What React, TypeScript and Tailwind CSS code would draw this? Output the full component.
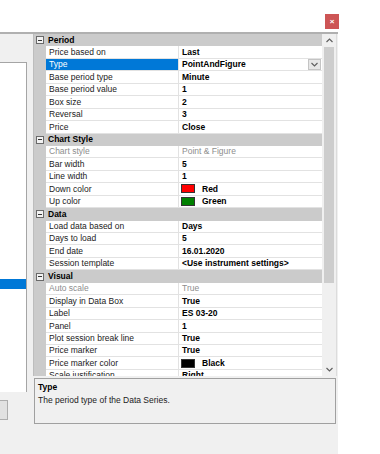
import React from 'react'

type Row =
  | { kind: 'header'; title: string }
  | {
      kind: 'prop'
      name: string
      value: string
      disabled?: boolean
      selected?: boolean
      dropdown?: boolean
      swatch?: string
    }

const rows: Row[] = [
  { kind: 'header', title: 'Period' },
  { kind: 'prop', name: 'Price based on', value: 'Last' },
  { kind: 'prop', name: 'Type', value: 'PointAndFigure', selected: true, dropdown: true },
  { kind: 'prop', name: 'Base period type', value: 'Minute' },
  { kind: 'prop', name: 'Base period value', value: '1' },
  { kind: 'prop', name: 'Box size', value: '2' },
  { kind: 'prop', name: 'Reversal', value: '3' },
  { kind: 'prop', name: 'Price', value: 'Close' },
  { kind: 'header', title: 'Chart Style' },
  { kind: 'prop', name: 'Chart style', value: 'Point & Figure', disabled: true },
  { kind: 'prop', name: 'Bar width', value: '5' },
  { kind: 'prop', name: 'Line width', value: '1' },
  { kind: 'prop', name: 'Down color', value: 'Red', swatch: '#ff0000' },
  { kind: 'prop', name: 'Up color', value: 'Green', swatch: '#008000' },
  { kind: 'header', title: 'Data' },
  { kind: 'prop', name: 'Load data based on', value: 'Days' },
  { kind: 'prop', name: 'Days to load', value: '5' },
  { kind: 'prop', name: 'End date', value: '16.01.2020' },
  { kind: 'prop', name: 'Session template', value: '<Use instrument settings>' },
  { kind: 'header', title: 'Visual' },
  { kind: 'prop', name: 'Auto scale', value: 'True', disabled: true },
  { kind: 'prop', name: 'Display in Data Box', value: 'True' },
  { kind: 'prop', name: 'Label', value: 'ES 03-20' },
  { kind: 'prop', name: 'Panel', value: '1' },
  { kind: 'prop', name: 'Plot session break line', value: 'True' },
  { kind: 'prop', name: 'Price marker', value: 'True' },
  { kind: 'prop', name: 'Price marker color', value: 'Black', swatch: '#000000' },
  { kind: 'prop', name: 'Scale justification', value: 'Right' },
]

function Chevron({ up }: { up?: boolean }) {
  return (
    <svg width="7" height="5" viewBox="0 0 7 5">
      <path
        d={up ? 'M0.5 4 L3.5 1 L6.5 4' : 'M0.5 1 L3.5 4 L6.5 1'}
        fill="none"
        stroke="#606060"
        strokeWidth="1.2"
      />
    </svg>
  )
}

function GridRow({ row }: { row: Row }) {
  if (row.kind === 'header') {
    return (
      <div className="h-[12.45px] flex items-center bg-[#cbcbcb] shrink-0">
        <div className="w-[12px] flex justify-center">
          <div className="w-[8px] h-[8px] border border-[#6a6a6a] bg-[#f2f2f2] flex items-center justify-center">
            <div className="w-[4px] h-px bg-[#333]" />
          </div>
        </div>
        <span className="pl-[2px] font-bold text-black">{row.title}</span>
      </div>
    )
  }
  return (
    <div className="h-[12.45px] flex shrink-0">
      <div className="w-[12px] bg-[#cbcbcb]" />
      <div
        className={`w-[133px] flex items-center pl-[3px] border-b border-r border-[#e2e2e2] ${
          row.selected ? 'bg-[#0078d7] text-white' : row.disabled ? 'bg-white text-[#8d8d8d]' : 'bg-white text-[#222]'
        }`}
      >
        {row.name}
      </div>
      <div
        className={`flex-1 flex items-center border-b border-[#e2e2e2] bg-white ${
          row.disabled ? 'text-[#8d8d8d] pl-[3px]' : 'font-bold text-black pl-[3px]'
        }`}
      >
        {row.swatch && (
          <div
            className="w-[14px] h-[9px] mr-[7px] border border-[#333] -ml-[1px]"
            style={{ background: row.swatch }}
          />
        )}
        <span className="flex-1">{row.value}</span>
        {row.dropdown && (
          <div className="w-[13px] h-[11px] mr-[1px] bg-[#e6e6e6] border border-[#c4c4c4] flex items-center justify-center">
            <Chevron />
          </div>
        )}
      </div>
    </div>
  )
}

export default function App() {
  return (
    <div
      className="w-[380px] h-[454px] bg-white overflow-hidden text-[8.5px] leading-none"
      style={{ fontFamily: '"Liberation Sans", Arial, sans-serif' }}
    >
      <div className="h-[32px] flex justify-end items-start pt-[14px] pr-[41px]">
        <div className="w-[14px] h-[15px] bg-[#cd5555] flex items-center justify-center text-white text-[8px] font-bold">
          ×
        </div>
      </div>

      <div className="w-[338px] h-[422px] bg-[#f0f0f0] border-t-2 border-[#b0b0b0] flex">
        {/* left panel */}
        <div className="w-[27px] flex flex-col">
          <div className="h-[28px]" />
          <div className="h-[330px] bg-white border-t border-r border-[#a5a5a5] flex flex-col">
            <div className="h-[216px]" />
            <div className="h-[10px] bg-[#0078d7]" />
          </div>
          <div className="h-[8px]" />
          <div className="w-[8px] h-[20px] bg-[#e1e1e1] border border-l-0 border-[#adadad]" />
        </div>

        {/* property grid + description */}
        <div className="ml-[6px] w-[304px] flex flex-col">
          <div className="h-[342px] flex border-l border-[#bdbdbd] bg-white overflow-hidden">
            <div className="w-[288px] flex flex-col overflow-hidden">
              {rows.map((r, i) => (
                <GridRow key={i} row={r} />
              ))}
            </div>
            <div className="w-[15px] bg-[#f0f0f0] flex flex-col items-center border-r border-[#dcdcdc]">
              <div className="h-[13px] flex items-center justify-center">
                <Chevron up />
              </div>
              <div className="w-[10px] h-[236px] bg-[#cdcdcd]" />
              <div className="flex-1" />
              <div className="h-[13px] flex items-center justify-center">
                <Chevron />
              </div>
            </div>
          </div>
          <div className="mt-[2px] ml-[1px] w-[302px] h-[46px] border border-[#a0a0a0] bg-[#f0f0f0] px-[3px] pt-[4px]">
            <div className="font-bold text-black">Type</div>
            <div className="mt-[4px] text-[#222]">The period type of the Data Series.</div>
          </div>
        </div>
      </div>
    </div>
  )
}
